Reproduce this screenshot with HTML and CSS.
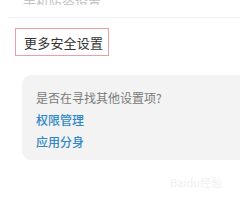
FILE: index.html
```html
<!DOCTYPE html>
<html lang="zh">
<head>
<meta charset="utf-8">
<link rel="stylesheet" href="styles.css">
</head>
<body>
<div class="page">
  <div class="top-row"><span class="top-text">手机防盗设置</span></div>
  <div class="divider"></div>
  <div class="section">
    <span class="title-box">更多安全设置</span>
  </div>
  <div class="card">
    <div class="hint">是否在寻找其他设置项?</div>
    <div class="link">权限管理</div>
    <div class="link">应用分身</div>
  </div>
  <div class="watermark">Baidu经验</div>
</div>
</body>
</html>
```
FILE: styles.css
```css
html, body {
  margin: 0;
  padding: 0;
  background: #ffffff;
  width: 240px;
  height: 210px;
  overflow: hidden;
  font-family: "Noto Sans CJK SC", "Noto Sans", sans-serif;
}
.page {
  display: flex;
  flex-direction: column;
}
.top-row {
  height: 6px;
  margin-top: -1px;
  padding-left: 23px;
  overflow: hidden;
  display: flex;
  align-items: flex-end;
}
.top-text {
  font-size: 13px;
  line-height: 13px;
  color: #c4c4c4;
  margin-bottom: -3px;
}
.divider {
  height: 1px;
  background: #f0f0f0;
  margin: 12px 0 0 8px;
}
.section {
  padding: 10px 0 0 15px;
  display: flex;
}
.title-box {
  display: inline-block;
  border: 1px solid #e8a0a8;
  padding: 6px 5px 5px 8px;
  font-size: 13px;
  line-height: 15px;
  letter-spacing: 0.2px;
  color: #333333;
}
.card {
  margin: 19px -12px 0 22px;
  background: #f3f3f3;
  border-radius: 9px;
  padding: 15px 14px 12px 14px;
  display: flex;
  flex-direction: column;
  gap: 6px;
  height: 58px;
}
.hint {
  font-size: 12px;
  line-height: 16px;
  color: #7a7a7a;
}
.link {
  font-size: 12px;
  line-height: 16px;
  color: #2f87c9;
  font-weight: 500;
}
.watermark {
  align-self: flex-end;
  margin: 14px 18px 0 0;
  font-size: 11px;
  color: #f0f0f0;
}
```
